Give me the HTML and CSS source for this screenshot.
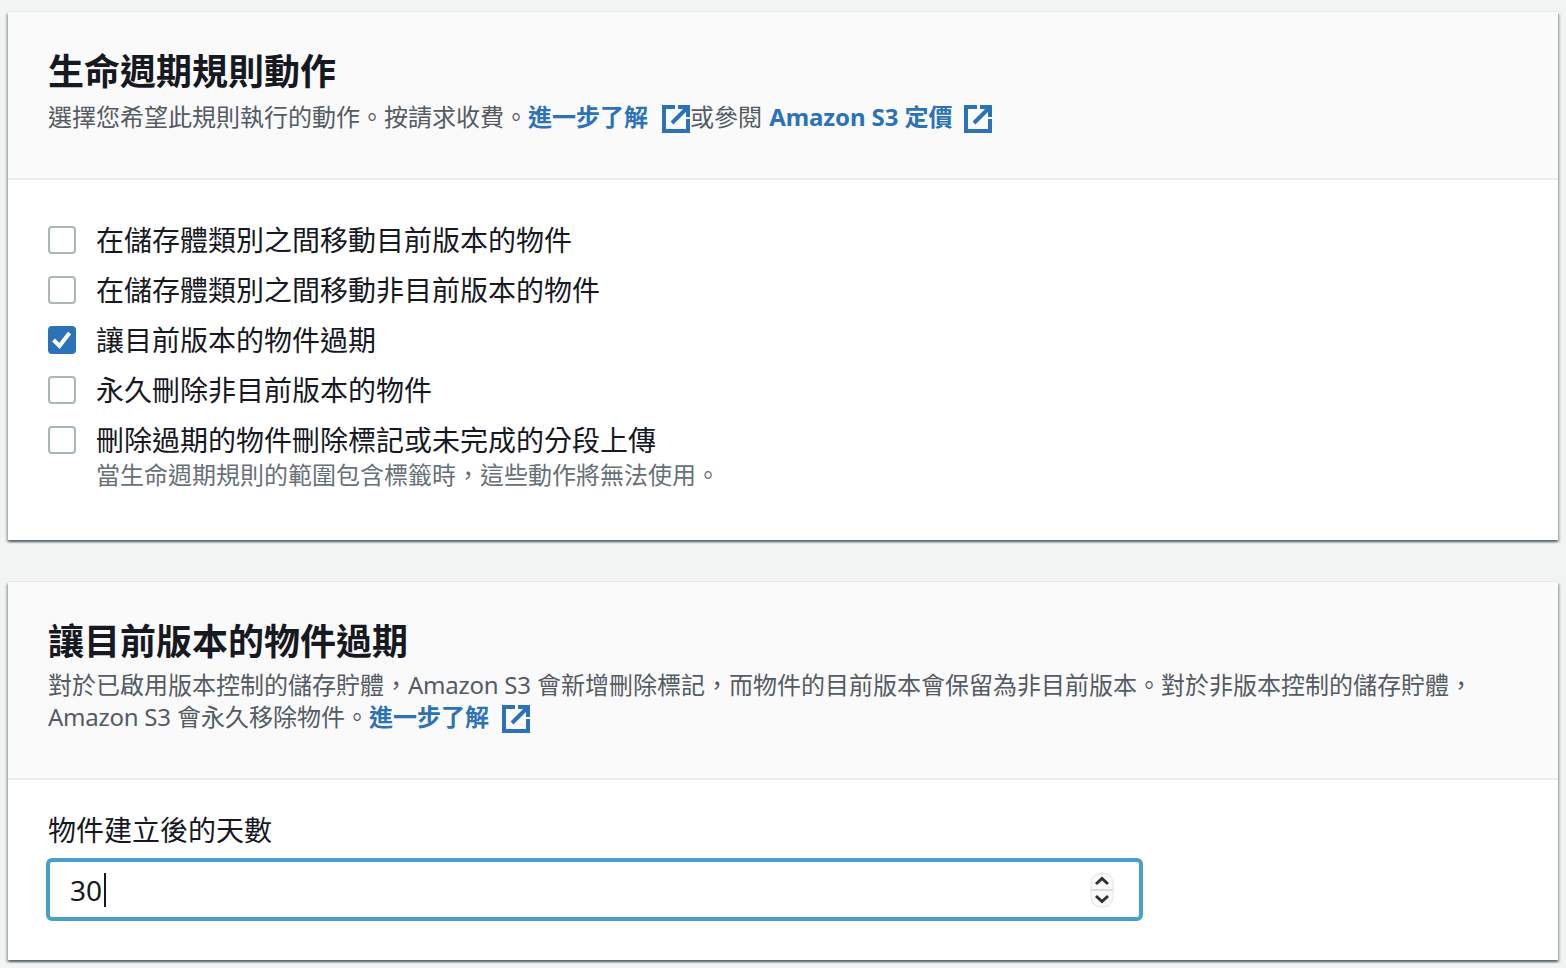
FILE: index.html
```html
<!DOCTYPE html>
<html lang="zh-Hant">
<head>
<meta charset="utf-8">
<title>生命週期規則動作</title>
<link rel="stylesheet" href="styles.css">
</head>
<body>
<main class="page">
  <section class="card">
    <header class="card-head">
      <h2 class="title">生命週期規則動作</h2>
      <p class="desc desc-single">選擇您希望此規則執行的動作。按請求收費。<a class="link" href="#">進一步了解<svg class="ext" viewBox="0 0 28 28"><path d="M13 2H2v24h24V14M16 2h10v10M26 2 10 18"/></svg></a>或參閱 <a class="link link-pricing" href="#"><span class="latin-bold">Amazon S3</span> 定價<svg class="ext ext-pricing" viewBox="0 0 28 28"><path d="M13 2H2v24h24V14M16 2h10v10M26 2 10 18"/></svg></a></p>
    </header>
    <div class="card-body checks">
      <label class="check"><span class="box"></span><span class="check-text">在儲存體類別之間移動目前版本的物件</span></label>
      <label class="check"><span class="box"></span><span class="check-text">在儲存體類別之間移動非目前版本的物件</span></label>
      <label class="check"><span class="box on"><svg viewBox="0 0 28 28"><path d="M5.500 14l6 6 10-13"/></svg></span><span class="check-text">讓目前版本的物件過期</span></label>
      <label class="check"><span class="box"></span><span class="check-text">永久刪除非目前版本的物件</span></label>
      <label class="check"><span class="box"></span><span class="check-text">刪除過期的物件刪除標記或未完成的分段上傳<small class="hint">當生命週期規則的範圍包含標籤時，這些動作將無法使用。</small></span></label>
    </div>
  </section>
  <section class="card">
    <header class="card-head">
      <h2 class="title">讓目前版本的物件過期</h2>
      <p class="desc">對於已啟用版本控制的儲存貯體，<span class="latin">Amazon S3</span> 會新增刪除標記，而物件的目前版本會保留為非目前版本。對於非版本控制的儲存貯體，<span class="latin">Amazon S3</span> 會永久移除物件。<a class="link" href="#">進一步了解<svg class="ext ext-wrapped" viewBox="0 0 28 28"><path d="M13 2H2v24h24V14M16 2h10v10M26 2 10 18"/></svg></a></p>
    </header>
    <div class="card-body field">
      <div class="field-label">物件建立後的天數</div>
      <div class="input"><span class="value">30</span><span class="caret"></span>
        <svg class="spin" viewBox="0 0 24 36"><rect class="spin-bg" x="1" y="1" width="22" height="34" rx="10"/><path class="spin-line" d="M1 18h22"/><path class="spin-arrow" d="M6 12l6-5.500 6 5.500M6 24l6 5.500 6-5.500"/></svg>
      </div>
    </div>
  </section>
</main>
</body>
</html>
```
FILE: styles.css
```css
* { box-sizing: border-box; }
html, body { margin: 0; height: 100%; }
body {
  background: #f2f3f3;
  color: #16191f;
  font-family: "Noto Sans", "Noto Sans CJK TC", sans-serif;
  overflow: hidden;
}
.page {
  display: flex;
  flex-direction: column;
  gap: 42px;
  padding: 12px 8px 0;
}
.card {
  background: #fff;
  box-shadow: 0 2px 2px 0 rgba(0, 28, 36, .45), 2px 2px 2px 0 rgba(0, 28, 36, .2), -2px 2px 2px 0 rgba(0, 28, 36, .2), 0 -1px 0 0 #e8ebeb;
}
.card-head {
  background: #fafafa;
  border-bottom: 2px solid #eaeded;
  padding: 38px 40px 45px;
}
.title {
  margin: 0;
  font-size: 36px;
  line-height: 44px;
  font-weight: 700;
}
.desc {
  margin: 5px 0 0;
  font-size: 24px;
  line-height: 32px;
  color: #545b64;
}
.desc-single { margin-top: 7px; }
.latin { letter-spacing: -.25px; }
.latin-bold { letter-spacing: -.1px; }
.link {
  color: #2c72b8;
  font-weight: 700;
  text-decoration: none;
}
.link-pricing { margin-left: 1px; }
.ext {
  display: inline-block;
  width: 28px;
  height: 28px;
  margin-left: 14px;
  vertical-align: -7px;
  fill: none;
  stroke: #2c72b8;
  stroke-width: 4;
}
.ext-pricing { margin-left: 11px; }
.ext-wrapped { margin-left: 13px; }
.checks {
  display: flex;
  flex-direction: column;
  gap: 8px;
  padding: 39px 40px 49px;
}
.check {
  display: flex;
  gap: 20px;
  font-size: 28px;
  line-height: 42px;
}
.box {
  flex: none;
  width: 28px;
  height: 28px;
  margin-top: 7px;
  background: #fff;
  border: 2px solid #aab7b8;
  border-radius: 4px;
}
.box.on {
  background: #2c72b8;
  border: 0;
}
.box svg {
  display: block;
  fill: none;
  stroke: #fff;
  stroke-width: 4;
}
.hint {
  display: block;
  margin-top: -2px;
  font-size: 24px;
  line-height: 32px;
  color: #687078;
}
.field {
  padding: 30px 40px 39px;
}
.field-label {
  font-size: 28px;
  line-height: 40px;
}
.input {
  display: flex;
  align-items: center;
  width: 1097px;
  height: 63px;
  margin: 8px 0 0 -2px;
  padding: 0 36px 0 20px;
  background: #fff;
  border: 4px solid #4a9fc6;
  border-radius: 6px;
  font-size: 28px;
}
.value { line-height: 40px; }
.caret {
  width: 2px;
  height: 34px;
  margin-left: 2px;
  background: #16191f;
}
.spin {
  width: 24px;
  height: 36px;
  margin-left: auto;
  margin-right: -11px;
}
.spin-bg { fill: #fafafa; stroke: #e4e4e4; stroke-width: 1; }
.spin-line { stroke: #dcdcdc; stroke-width: 2; }
.spin-arrow { fill: none; stroke: #2b2f36; stroke-width: 3; }
```
